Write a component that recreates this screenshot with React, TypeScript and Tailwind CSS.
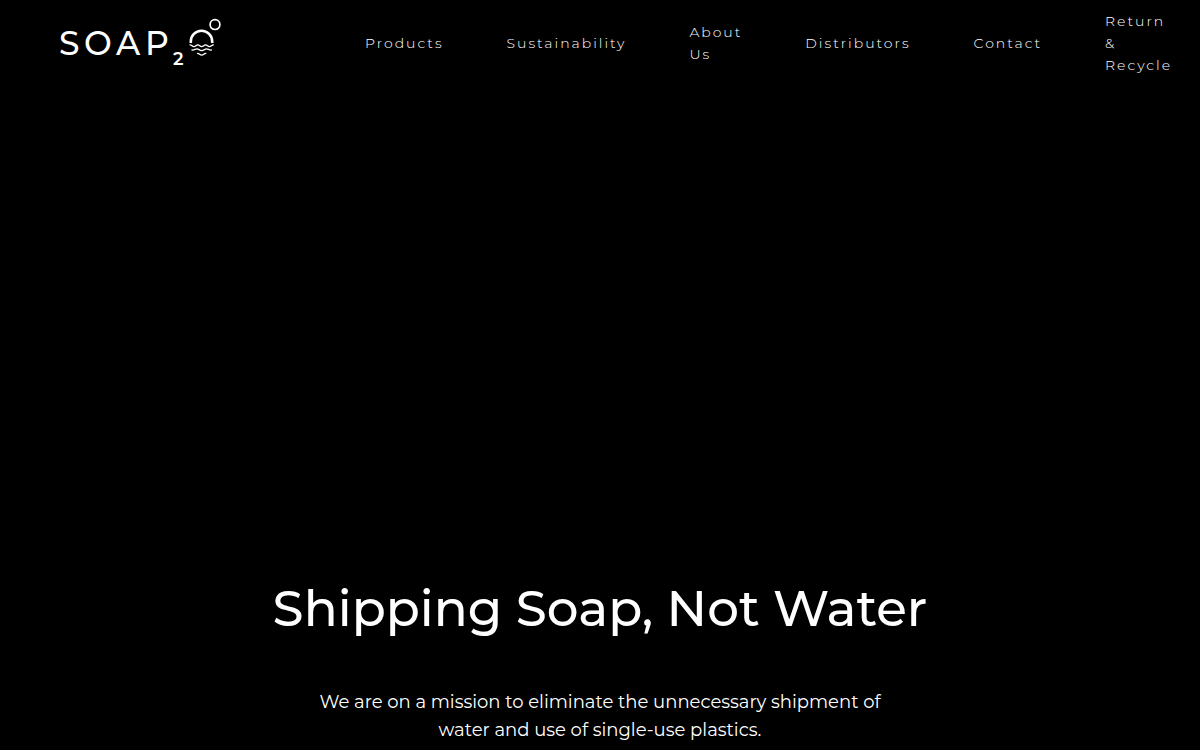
const links = [
    { label: "Products", href: "#products" },
    { label: "Sustainability", href: "#sustainability" },
    { label: "About Us", href: "#about" },
    { label: "Distributors", href: "#distributors" },
    { label: "Contact", href: "#contact" },
    { label: "Return & Recycle", href: "#recycle" },
];

function Logo() {
    return (
        <svg
            className="h-[58px] w-[164px]"
            viewBox="0 0 164 58"
            fill="none"
            stroke="white"
            role="img"
            aria-label="SOAP2O"
        >
            <text
                x="-1 24 56 85"
                y="41"
                fill="white"
                stroke="none"
                className="font-['Montserrat'] text-[33px] font-medium"
            >
                SOAP
            </text>
            <text
                x="113"
                y="51"
                fill="white"
                stroke="none"
                className="font-['Montserrat'] text-[18px] font-semibold"
            >
                2
            </text>
            {/* Sun over the waves */}
            <path strokeWidth="2.6" d="M130.800 29v-1.500a10.700 10.700 0 0 1 21.400 0v1.500" />
            <circle cx="155" cy="10.600" r="4.900" strokeWidth="1.7" />
            <path
                strokeWidth="1.3"
                strokeLinecap="round"
                d="M130 30.800c2 0 2 1.800 3.900 1.800s2-1.800 3.900-1.800s2 1.800 3.900 1.800s2-1.800 3.900-1.800s2 1.800 3.900 1.800s2-1.800 3.900-1.800"
            />
            <path
                strokeWidth="1.3"
                strokeLinecap="round"
                d="M132 36c2 .5 3.300-1.200 5-1.200s2.500 1.800 4.700 1.800s3-1.800 4.700-1.800s3 1.700 5 1.200"
            />
            <path
                strokeWidth="1.3"
                strokeLinecap="round"
                d="M137.500 39.300c2 0 2.200 1.800 4.200 1.800s2.200-1.800 4.200-1.800"
            />
        </svg>
    );
}

export default function App() {
    return (
        <div className="flex min-h-screen flex-col bg-black font-['Montserrat','Inter',sans-serif] text-white">
            <header className="flex items-center gap-[141px] py-[10px] pr-7 pl-[60px]">
                <a href="#home" className="shrink-0">
                    <Logo />
                </a>
                <nav className="flex flex-1 items-center justify-between text-[14px] leading-[22px] font-light tracking-[2px]">
                    {links.map((link) => (
                        <a key={link.label} href={link.href} className="w-min">
                            {link.label}
                        </a>
                    ))}
                </nav>
            </header>
            {/* Hero */}
            <main className="flex flex-1 flex-col items-center justify-end px-6 pb-[6px] text-center">
                <h1 className="mb-[49px] text-[50px] leading-[60px] font-medium">
                    Shipping Soap, Not Water
                </h1>
                <p className="max-w-[600px] text-[18px] leading-[28px]">
                    We are on a mission to eliminate the unnecessary shipment of
                    water and use of single-use plastics.
                </p>
            </main>
        </div>
    );
}
